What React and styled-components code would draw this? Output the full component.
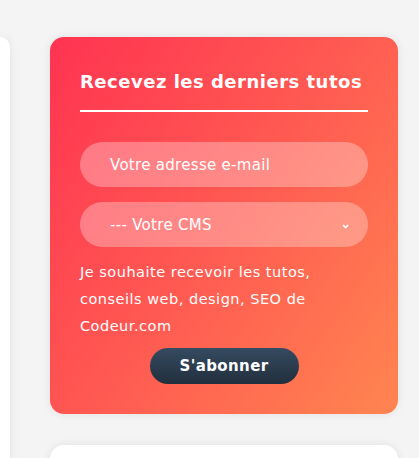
import styled, { createGlobalStyle } from "styled-components";

const GlobalStyle = createGlobalStyle`
  html, body {
    margin: 0;
    padding: 0;
    background: #f4f4f4;
    overflow: hidden;
  }
`;

const Page = styled.div`
  display: flex;
  gap: 40px;
  padding-top: 37px;
  height: 458px;
  box-sizing: border-box;
  overflow: hidden;
`;

const SidePanel = styled.div`
  width: 10px;
  height: 600px;
  background: #fff;
  border-radius: 0 14px 0 0;
  box-shadow: 0 0 10px rgba(0, 0, 0, 0.08);
`;

const Column = styled.div`
  width: 348px;
  display: flex;
  flex-direction: column;
  gap: 31px;
`;

const Card = styled.div`
  background: linear-gradient(125deg, #ff3351 0%, #ff5a52 50%, #ff8550 100%);
  border-radius: 14px;
  box-shadow: 0 0 10px rgba(0, 0, 0, 0.08);
  padding: 34px 30px 30px;
  display: flex;
  flex-direction: column;
`;

const Title = styled.h3`
  margin: 0;
  color: #fff;
  font-family: "DejaVu Sans", sans-serif;
  font-weight: 600;
  font-size: 18px;
  letter-spacing: 0.5px;
  line-height: 22px;
  padding-bottom: 17px;
  border-bottom: 2px solid #fff;
  white-space: nowrap;
`;

const Form = styled.div`
  display: flex;
  flex-direction: column;
  gap: 15px;
  margin-top: 30px;
`;

const Field = styled.div`
  height: 45px;
  border-radius: 23px;
  background: rgba(255, 255, 255, 0.3);
  display: flex;
  align-items: center;
  justify-content: space-between;
  padding: 0 19px 0 30px;
  color: #fff;
  font-family: "DejaVu Sans", sans-serif;
  font-size: 15px;
  letter-spacing: 0.3px;
`;

const Chevron = styled.svg`
  width: 7px;
  height: 5px;
  margin-top: 3px;
`;

const Note = styled.p`
  margin: 12px 0 0;
  color: #fff;
  font-family: "DejaVu Sans", sans-serif;
  font-size: 14.5px;
  line-height: 27px;
  letter-spacing: 0.5px;
  white-space: nowrap;
`;

const Button = styled.button`
  align-self: center;
  margin-top: 8px;
  width: 149px;
  height: 36px;
  border: none;
  border-radius: 18px;
  background: linear-gradient(180deg, #354b61 0%, #222f3d 100%);
  color: #fff;
  font-family: "DejaVu Sans", sans-serif;
  font-weight: 700;
  font-size: 15px;
  letter-spacing: 0.4px;
`;

const BlankCard = styled.div`
  height: 200px;
  flex-shrink: 0;
  background: #fff;
  border-radius: 14px;
  box-shadow: 0 0 10px rgba(0, 0, 0, 0.08);
`;

export default function App() {
  return (
    <>
      <GlobalStyle />
      <Page>
        <SidePanel />
        <Column>
          <Card>
            <Title>Recevez les derniers tutos</Title>
            <Form>
              <Field>Votre adresse e-mail</Field>
              <Field>
                --- Votre CMS
                <Chevron viewBox="0 0 7 5">
                  <path d="M1 1 L3.5 3.5 L6 1" stroke="#fff" strokeWidth="1.7" fill="none" />
                </Chevron>
              </Field>
            </Form>
            <Note>
              Je souhaite recevoir les tutos,
              <br />
              conseils web, design, SEO de
              <br />
              Codeur.com
            </Note>
            <Button>S'abonner</Button>
          </Card>
          <BlankCard />
        </Column>
      </Page>
    </>
  );
}
